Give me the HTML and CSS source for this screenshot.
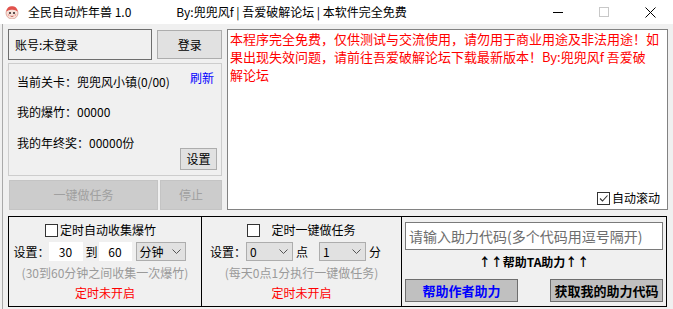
FILE: index.html
```html
<!DOCTYPE html>
<html lang="zh-CN">
<head>
<meta charset="utf-8">
<title>全民自动炸年兽 1.0</title>
<link rel="stylesheet" href="styles.css">
</head>
<body>
<div class="titlebar">
  <svg class="app-icon" width="14" height="14" viewBox="0 0 14 14">
    <circle cx="7" cy="8" r="6" fill="#f6e2da" stroke="#d99a8e" stroke-width="0.8"/>
    <path d="M1.3 6.5 Q2 1.2 7 1.2 Q12 1.2 12.7 6.5 Q10 4.5 7 4.8 Q4 4.5 1.3 6.5 Z" fill="#e2524c"/>
    <circle cx="5" cy="8" r="1.1" fill="#3a2a2a"/>
    <circle cx="9" cy="8" r="1.1" fill="#3a2a2a"/>
    <path d="M5.5 11 Q7 12 8.5 11" stroke="#c0504a" stroke-width="0.9" fill="none"/>
    <circle cx="3.6" cy="10" r="0.9" fill="#f3a9a0"/>
    <circle cx="10.4" cy="10" r="0.9" fill="#f3a9a0"/>
  </svg>
  <span class="title">全民自动炸年兽 1.0</span>
  <span class="subtitle">By:兜兜风f | 吾爱破解论坛 | 本软件完全免费</span>
  <div class="controls">
    <span class="ctl"><svg width="10" height="10" viewBox="0 0 10 10"><path d="M0 5.5H10" stroke="#000" stroke-width="1"/></svg></span>
    <span class="ctl"><svg width="10" height="10" viewBox="0 0 10 10"><rect x="0.5" y="0.5" width="9" height="9" fill="none" stroke="#c8c8c8" stroke-width="1"/></svg></span>
    <span class="ctl"><svg width="11" height="11" viewBox="0 0 11 11"><path d="M0.5 0.5L10.5 10.5M10.5 0.5L0.5 10.5" stroke="#000" stroke-width="1"/></svg></span>
  </div>
</div>

<div class="main">
  <div class="left">
    <div class="account-row">
      <div class="account">账号:未登录</div>
      <div class="btn login">登录</div>
    </div>
    <div class="info">
      <div class="info-head">
        <span class="info-line first">当前关卡：兜兜风小镇(0/00)</span>
        <span class="refresh">刷新</span>
      </div>
      <div class="info-line second">我的爆竹：00000</div>
      <div class="info-last">
        <span class="info-line">我的年终奖：00000份</span>
        <span class="btn small set">设置</span>
      </div>
    </div>
    <div class="task-row">
      <div class="btn disabled task">一键做任务</div>
      <div class="btn disabled stop">停止</div>
    </div>
  </div>
  <div class="log">
    <div class="log-text">本程序完全免费，仅供测试与交流使用，请勿用于商业用途及非法用途！如<br>果出现失效问题，请前往吾爱破解论坛下载最新版本！By:兜兜风f 吾爱破<br>解论坛</div>
    <label class="autoscroll"><span class="cb checked"><svg width="11" height="11" viewBox="0 0 11 11"><path d="M2 5.5L4.5 8L9.5 2.5" stroke="#333" stroke-width="1.1" fill="none"/></svg></span>自动滚动</label>
  </div>
</div>

<div class="groups">
  <div class="group g1">
    <div class="g-head"><span class="cb"></span><span class="g-title">定时自动收集爆竹</span></div>
    <div class="g-row">
      <span class="lbl">设置：</span>
      <span class="num n1">30</span>
      <span class="to">到</span>
      <span class="num n2">60</span>
      <span class="select sel-unit">分钟<svg class="chev" width="9" height="5" viewBox="0 0 9 5"><path d="M0.5 0.5L4.5 4.5L8.5 0.5" stroke="#555" fill="none"/></svg></span>
    </div>
    <div class="hint">(30到60分钟之间收集一次爆竹)</div>
    <div class="status">定时未开启</div>
  </div>
  <div class="group g2">
    <div class="g-head"><span class="cb"></span><span class="g-title wide">定时一键做任务</span></div>
    <div class="g-row">
      <span class="lbl">设置：</span>
      <span class="select sel-num">0<svg class="chev" width="9" height="5" viewBox="0 0 9 5"><path d="M0.5 0.5L4.5 4.5L8.5 0.5" stroke="#555" fill="none"/></svg></span>
      <span class="unit dian">点</span>
      <span class="select sel-num">1<svg class="chev" width="9" height="5" viewBox="0 0 9 5"><path d="M0.5 0.5L4.5 4.5L8.5 0.5" stroke="#555" fill="none"/></svg></span>
      <span class="unit fen">分</span>
    </div>
    <div class="hint">(每天0点1分执行一键做任务)</div>
    <div class="status">定时未开启</div>
  </div>
  <div class="group g3">
    <div class="code-input">请输入助力代码(多个代码用逗号隔开)</div>
    <div class="help-ta">↑↑帮助TA助力↑↑</div>
    <div class="g3-btns">
      <div class="btn3 blue">帮助作者助力</div>
      <div class="btn3">获取我的助力代码</div>
    </div>
  </div>
</div>
</body>
</html>
```

FILE: styles.css
```css
* { box-sizing: border-box; margin: 0; padding: 0; }
html, body { width: 673px; height: 309px; overflow: hidden; }
body {
  background: linear-gradient(90deg, #f0f0f0 2px, #a9a9a9 2px, #a9a9a9 3px, #f0f0f0 3px);
  font-family: "Noto Sans CJK SC", "Microsoft YaHei", sans-serif;
  font-size: 12px;
  line-height: 16px;
  color: #000;
}

/* title bar */
.titlebar {
  height: 24px;
  background: #fff;
  display: flex;
  align-items: center;
}
.app-icon { margin-left: 5px; margin-right: 9px; }
.title { font-size: 12px; }
.subtitle { margin-left: 45px; font-size: 12px; }
.controls { margin-left: auto; display: flex; height: 24px; }
.ctl { width: 46px; display: flex; align-items: center; justify-content: center; }

/* main area */
.main {
  display: flex;
  gap: 5px;
  padding: 5px 5px 0 8px;
  height: 186px;
}
.left { width: 214px; display: flex; flex-direction: column; }
.account-row { display: flex; align-items: center; gap: 5px; height: 31px; }
.account {
  width: 145px; height: 31px;
  border: 1px solid #6e6e6e;
  padding-left: 6px;
  display: flex; align-items: center;
}
.btn {
  display: flex; align-items: center; justify-content: center;
  background: #e1e1e1;
  border: 1px solid #adadad;
}
.login { width: 65px; height: 29px; }
.info {
  margin-top: 3px;
  height: 113px;
  border: 1px solid #cdcdcd;
  padding: 10px 4px 5px 8px;
  display: flex; flex-direction: column;
}
.info-head { display: flex; justify-content: space-between; align-items: flex-start; }
.refresh { color: #0000ff; margin-right: 3px; margin-top: -4px; }
.info-line.second { margin-top: 14px; }
.info-last { margin-top: 15px; display: flex; justify-content: space-between; align-items: flex-start; }
.set { width: 37px; height: 22px; margin-top: 13px; }
.task-row { margin-top: 4px; display: flex; gap: 2px; height: 30px; padding-left: 1px; }
.disabled { background: #cccccc; border-color: #c4c4c4; color: #a0a0a0; height: 30px; }
.task { width: 149px; }
.stop { width: 62px; }

.log {
  width: 441px;
  height: 181px;
  background: #fff;
  border: 1px solid #828282;
  display: flex; flex-direction: column;
}
.log-text {
  flex: 1;
  color: #ff0000;
  font-size: 13px;
  line-height: 18px;
  padding: 0 0 0 2px;
  white-space: nowrap;
}
.autoscroll {
  align-self: flex-end;
  display: flex; align-items: center;
  margin: 0 7px 3px 0;
  font-size: 12px;
  line-height: 16px;
}
.cb {
  width: 13px; height: 13px;
  background: #fff;
  border: 1px solid #333;
  display: inline-flex; align-items: center; justify-content: center;
}
.autoscroll .cb { margin-right: 2px; }

/* groups */
.groups {
  margin: 6px 6px 0 8px;
  height: 91px;
  display: flex;
}
.group {
  border: 1px solid #000;
  display: flex; flex-direction: column; align-items: center;
}
.g1 { width: 193px; border-right: 0; }
.g2 { width: 200px; border-right: 0; }
.g3 { width: 266px; align-items: stretch; padding: 5px 3px 4px 3px; }
.g-head { display: flex; align-items: center; margin-top: 5px; height: 16px; }
.g1 .g-head { margin-left: -9px; }
.g-title { margin-left: 2px; }
.g-title.wide { margin-left: 11px; }
.g-row { display: flex; align-items: center; height: 19px; margin-top: 4px; }
.g1 .g-row { margin-left: -11px; }
.num {
  background: #fff;
  height: 19px;
  display: flex; align-items: center; justify-content: center;
}
.n1 { width: 34px; margin-left: -1px; }
.n2 { width: 33px; }
.to { margin: 0 1px 0 3px; }
.select {
  height: 19px;
  background: #e1e1e1;
  border: 1px solid #adadad;
  display: flex; align-items: center;
  padding-left: 3px;
}
.chev { margin-left: auto; margin-right: 4px; }
.sel-unit { width: 50px; margin-left: 4px; }
.sel-num { width: 47px; }
.g2 .lbl { margin-left: -12px; }
.dian { margin: 0 11px 0 3px; }
.fen { margin-left: 3px; }
.hint { color: #9a9a9a; margin-top: 4px; height: 16px; }
.status { color: #ff0000; margin-top: 4px; height: 16px; }

.code-input {
  height: 28px;
  background: #fff;
  border: 1px solid #7a7a7a;
  color: #6d6d6d;
  font-size: 14px;
  display: flex; align-items: center;
  padding-left: 3px;
  white-space: nowrap;
}
.help-ta {
  text-align: center;
  font-weight: bold;
  font-size: 12px;
  margin-top: 4px;
  height: 16px;
  line-height: 16px;
}
.g3-btns { display: flex; justify-content: space-between; margin-top: 9px; }
.btn3 {
  width: 113px; height: 23px;
  background: #c0c0c0;
  border: 1px solid #6e6e6e;
  font-weight: bold;
  font-size: 13px;
  display: flex; align-items: center; justify-content: center;
}
.btn3.blue { color: #0000ff; }
```
